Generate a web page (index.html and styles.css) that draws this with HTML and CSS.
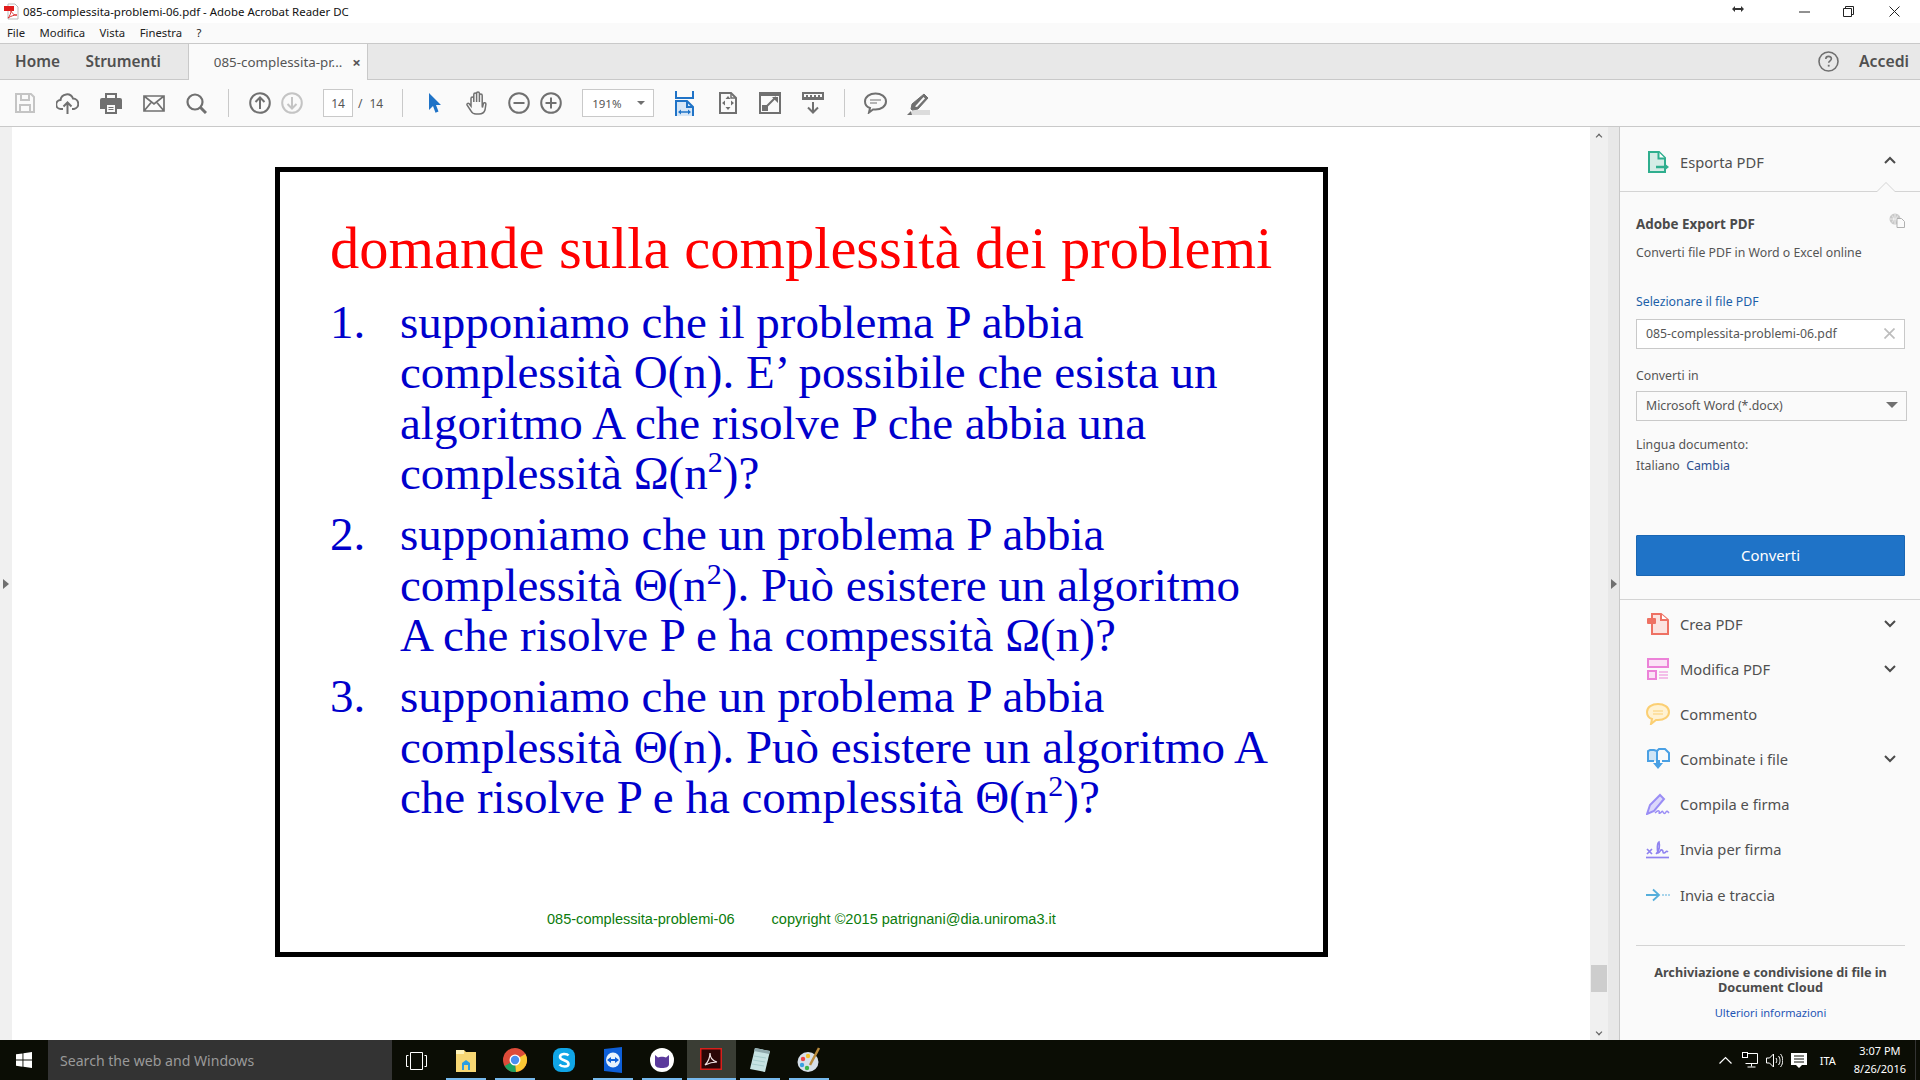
FILE: index.html
```html
<!DOCTYPE html>
<html lang="it">
<head>
<meta charset="utf-8">
<title>085-complessita-problemi-06.pdf - Adobe Acrobat Reader DC</title>
<link rel="stylesheet" href="styles.css">
</head>
<body>
<header class="titlebar">
  <svg class="app-icon" width="16" height="17" viewBox="0 0 16 17"><path d="M5 1h7l3 3v12H5z" fill="#fff" stroke="#bbb"/><rect x="1" y="3" width="10" height="5" fill="#e01b1b"/><path d="M5 15c2-2 3-5 3-8 1 4 3 5 6 5-3 0-6 1-9 3z" fill="none" stroke="#d33" stroke-width="1"/></svg>
  <span class="title-text">085-complessita-problemi-06.pdf - Adobe Acrobat Reader DC</span>
  <div class="winctl">
    <svg class="ctl-resize" width="12" height="8" viewBox="0 0 12 8"><path d="M0 4l3-3v2h6V1l3 3-3 3V5H3v2z" fill="#333"/></svg>
    <svg class="ctl-min" width="11" height="2" viewBox="0 0 11 2"><path d="M0 1h11" stroke="#222"/></svg>
    <svg class="ctl-max" width="11" height="11" viewBox="0 0 11 11"><path d="M.5 2.5h8v8h-8zM2.5 2.5v-2h8v8h-2" fill="none" stroke="#222"/></svg>
    <svg class="ctl-close" width="11" height="11" viewBox="0 0 11 11"><path d="M.5.5l10 10M10.5.5l-10 10" stroke="#222"/></svg>
  </div>
</header>
<nav class="menubar"><span>File</span><span>Modifica</span><span>Vista</span><span>Finestra</span><span>?</span></nav>
<div class="tabbar">
  <span class="tab-main home">Home</span>
  <span class="tab-main tools">Strumenti</span>
  <div class="doc-tab"><span>085-complessita-pr...</span><b class="tab-x">×</b></div>
  <div class="tab-right">
    <svg width="21" height="21" viewBox="0 0 21 21"><circle cx="10.5" cy="10.5" r="9.5" fill="none" stroke="#707070" stroke-width="1.6"/><path d="M7.8 8c0-3.6 5.6-3.4 5.6-.2 0 2-2.7 2-2.7 4" fill="none" stroke="#707070" stroke-width="1.6"/><rect x="9.8" y="13.8" width="1.8" height="1.8" fill="#707070"/></svg>
    <span class="signin">Accedi</span>
  </div>
</div>
<div class="toolbar">
  <span class="slot s-first"><svg width="20" height="20" viewBox="0 0 20 20"><path d="M1 1h15l3 3v15H1z" fill="none" stroke="#c4c4c4" stroke-width="2"/><path d="M6 1v6h8V1M5 19v-7h10v7" fill="none" stroke="#c4c4c4" stroke-width="2"/></svg></span>
  <span class="slot"><svg width="23" height="23" viewBox="0 0 23 23"><path d="M7 17H5a4.5 4.5 0 0 1-.5-9A6.5 6.5 0 0 1 17 6.500a5.300 5.300 0 0 1 1 10.500h-2" fill="none" stroke="#707070" stroke-width="2"/><path d="M11.500 22V11M7.500 14.500l4-4 4 4" fill="none" stroke="#707070" stroke-width="2"/></svg></span>
  <span class="slot"><svg width="22" height="21" viewBox="0 0 22 21"><path d="M5 5V0h12v5h3a2 2 0 0 1 2 2v9h-5v5H5v-5H0V7a2 2 0 0 1 2-2z" fill="#707070"/><path d="M7 2h8v3H7zM7 12h8v7H7z" fill="#fafafa"/><path d="M8.500 14.500h5M8.500 16.500h5" stroke="#707070"/></svg></span>
  <span class="slot"><svg width="22" height="17" viewBox="0 0 22 17"><path d="M1 1h20v15H1zM1 1l10 8 10-8M1 16l7.500-9M21 16l-7.500-9" fill="none" stroke="#707070" stroke-width="1.700"/></svg></span>
  <span class="slot"><svg width="21" height="21" viewBox="0 0 21 21"><circle cx="9" cy="9" r="7.500" fill="none" stroke="#707070" stroke-width="2.200"/><path d="M14 14l6 6" stroke="#707070" stroke-width="3"/></svg></span>
  <i class="divider d1"></i>
  <span class="slot narrow"><svg width="22" height="22" viewBox="0 0 22 22"><circle cx="11" cy="11" r="9.800" fill="none" stroke="#707070" stroke-width="2"/><path d="M11 17V5.500M6.500 10l4.500-4.500 4.500 4.500" fill="none" stroke="#707070" stroke-width="2"/></svg></span>
  <span class="slot narrow"><svg width="22" height="22" viewBox="0 0 22 22"><circle cx="11" cy="11" r="9.800" fill="none" stroke="#c4c4c4" stroke-width="2"/><path d="M11 5v11.500M6.500 12l4.500 4.500 4.500-4.500" fill="none" stroke="#c4c4c4" stroke-width="2"/></svg></span>
  <span class="page-box">14</span>
  <span class="page-sep">/</span>
  <span class="page-total">14</span>
  <i class="divider d2"></i>
  <span class="slot pointer"><svg width="13" height="20" viewBox="0 0 13 20"><path d="M1 0l12 12H8l2.500 6.500-3 1.300L5 13l-4 4z" fill="#1f73c7"/></svg></span>
  <span class="slot hand"><svg width="24" height="24" viewBox="0 0 24 24"><path d="M6 15V7.500a1.300 1.300 0 0 1 2.800 0V11 3.500a1.300 1.300 0 0 1 2.800 0V11 2.500a1.300 1.300 0 0 1 2.800 0V11 4.500a1.300 1.300 0 0 1 2.800 0V15l.2 1.500 1-4a1.300 1.300 0 0 1 2.500.6L20 19c-1 3-3 4-6 4H11c-3 0-4-1-5-3l-4-6a1.300 1.300 0 0 1 2-1.500z" fill="none" stroke="#707070" stroke-width="1.500"/></svg></span>
  <span class="slot zoom-minus"><svg width="22" height="22" viewBox="0 0 22 22"><circle cx="11" cy="11" r="9.800" fill="none" stroke="#707070" stroke-width="2"/><path d="M5.500 11h11" stroke="#707070" stroke-width="2"/></svg></span>
  <span class="slot zoom-plus"><svg width="22" height="22" viewBox="0 0 22 22"><circle cx="11" cy="11" r="9.800" fill="none" stroke="#707070" stroke-width="2"/><path d="M5.500 11h11M11 5.500v11" stroke="#707070" stroke-width="2"/></svg></span>
  <span class="zoom-box"><span>191%</span><i class="tri"></i></span>
  <span class="slot fit-w"><svg width="19" height="25" viewBox="0 0 19 25"><path d="M1 0v7h17V0" fill="none" stroke="#1f73c7" stroke-width="2"/><path d="M1 25V10h11l6 6v9" fill="#d6e6f6" stroke="#1f73c7" stroke-width="2"/><path d="M12 10v6h6" fill="none" stroke="#1f73c7" stroke-width="2"/><path d="M4 21h11" stroke="#1f73c7" stroke-width="1.500"/><path d="M3 21l3-2.500v5zM16 21l-3-2.500v5z" fill="#1f73c7"/></svg></span>
  <span class="slot fit-p"><svg width="18" height="22" viewBox="0 0 18 22"><path d="M1 1h11l5 5v15H1z" fill="none" stroke="#707070" stroke-width="2"/><path d="M12 1v5h5" fill="none" stroke="#707070" stroke-width="1.500"/><path d="M9 4l2.500 3h-5zM9 18l2.500-3h-5zM3 11l3-2.500v5zM15 11l-3-2.500v5z" fill="#707070"/></svg></span>
  <span class="slot full"><svg width="22" height="22" viewBox="0 0 22 22"><rect width="22" height="22" fill="#707070"/><rect x="2" y="4" width="18" height="16" fill="#fafafa"/><path d="M3 19h6v-6H3zM13 5l6 0v6z" fill="#707070"/><path d="M8 14l9-9" stroke="#707070" stroke-width="2"/></svg></span>
  <span class="slot read"><svg width="22" height="22" viewBox="0 0 22 22"><path d="M0 0h22v8H0z" fill="#707070"/><path d="M2 2h18v3H2z" fill="#fafafa"/><path d="M4 3h2v2H4zM8 3h2v2H8zM12 3h2v2h-2zM16 3h2v2h-2z" fill="#707070"/><path d="M11 10v10M6 15.500l5 5 5-5" fill="none" stroke="#707070" stroke-width="2"/></svg></span>
  <i class="divider d3"></i>
  <span class="slot comment"><svg width="23" height="22" viewBox="0 0 23 22"><path d="M6 16C3 15 1 13 1 9.500 1 4.500 6 1.500 11.500 1.500S22 4.500 22 9.500s-5 8-10.500 8H9l-4 3z" fill="none" stroke="#707070" stroke-width="2"/><path d="M6 8h11M6 11h7" stroke="#707070" stroke-width="1.200"/></svg></span>
  <span class="slot sign"><svg width="23" height="23" viewBox="0 0 23 23"><rect x="5" y="18" width="18" height="5" fill="#dcdcdc"/><path d="M17 2l4 4-10 11-6 1-1-1 1-5z" fill="#707070" stroke="#707070" stroke-width="1"/><path d="M16.500 5l1.500 1.500-8 8.500-2-.5z" fill="#fafafa"/><path d="M0 23l4-4 1 4z" fill="#707070"/></svg></span>
</div>
<main class="workspace">
  <div class="left-gutter"><i class="gut-arrow"></i></div>
  <section class="viewer">
    <article class="slide">
      <h1>domande sulla complessità dei problemi</h1>
      <div class="item"><span class="num">1.</span><p>supponiamo che il problema P abbia<br>complessità O(n). E’ possibile che esista un<br>algoritmo A che risolve P che abbia una<br>complessità Ω(n<sup>2</sup>)?</p></div>
      <div class="item"><span class="num">2.</span><p>supponiamo che un problema P abbia<br>complessità Θ(n<sup>2</sup>). Può esistere un algoritmo<br>A che risolve P e ha compessità Ω(n)?</p></div>
      <div class="item"><span class="num">3.</span><p>supponiamo che un problema P abbia<br>complessità Θ(n). Può esistere un algoritmo A<br>che risolve P e ha complessità Θ(n<sup>2</sup>)?</p></div>
      <footer class="slide-foot"><span>085-complessita-problemi-06</span><span>copyright ©2015 patrignani@dia.uniroma3.it</span></footer>
    </article>
  </section>
  <div class="scrollbar"><i class="sb-up"></i><i class="sb-thumb"></i><i class="sb-down"></i></div>
  <div class="pane-split"><i class="gut-arrow"></i></div>
  <aside class="panel">
    <div class="panel-head">
      <svg class="tool-ic" width="22" height="22" viewBox="0 0 22 22"><path d="M2 1h10l6 6v14H2z" fill="#d5ece6" stroke="#2fae8e" stroke-width="2"/><path d="M11.500 1v6.500H18" fill="#fff" stroke="#2fae8e" stroke-width="2"/><path d="M9 16h9" stroke="#2fae8e" stroke-width="2.500"/><path d="M17 12l5 4-5 4z" fill="#2fae8e"/></svg>
      <span class="tool-name">Esporta PDF</span>
      <svg class="chev" width="12" height="8" viewBox="0 0 12 8"><path d="M1 7l5-5 5 5" fill="none" stroke="#4b4b4b" stroke-width="2"/></svg>
      <i class="notch"></i>
    </div>
    <div class="panel-body">
      <div class="export-title"><b>Adobe Export PDF</b>
        <svg width="16" height="15" viewBox="0 0 16 15"><circle cx="6" cy="6" r="5.500" fill="#c8c8c8"/><path d="M1 6h10M6 1v10M3 2.500c2 2 2 5 0 7M9 2.500c-2 2-2 5 0 7" stroke="#fafafa" stroke-width=".7" fill="none"/><path d="M8 5.500h4.500l3 3v6H8z" fill="#fafafa" stroke="#b0b0b0"/></svg>
      </div>
      <div class="row desc">Converti file PDF in Word o Excel online</div>
      <div class="row label-link">Selezionare il file PDF</div>
      <div class="field file"><span>085-complessita-problemi-06.pdf</span><svg width="11" height="11" viewBox="0 0 11 11"><path d="M.5.500l10 10M10.500.500l-10 10" stroke="#bdbdbd" stroke-width="1.700"/></svg></div>
      <div class="row label-conv">Converti in</div>
      <div class="field select"><span>Microsoft Word (*.docx)</span><i class="tri big"></i></div>
      <div class="row lang">Lingua documento:</div>
      <div class="row lang-val">Italiano&nbsp; <span class="cambia">Cambia</span></div>
      <button class="convert">Converti</button>
    </div>
    <ul class="tool-list">
      <li><svg class="tool-ic" width="22" height="22" viewBox="0 0 22 22"><path d="M5 1h9l7 6v14H5z" fill="#fbe3e0" stroke="#ee7163" stroke-width="2"/><path d="M14 1v6h7" fill="#fff" stroke="#ee7163" stroke-width="2"/><rect y="5" width="9" height="6" rx="1" fill="#ee7163"/></svg><span class="tool-name">Crea PDF</span><svg class="chev" width="12" height="8" viewBox="0 0 12 8"><path d="M1 1l5 5 5-5" fill="none" stroke="#4b4b4b" stroke-width="2"/></svg></li>
      <li><svg class="tool-ic" width="22" height="22" viewBox="0 0 22 22"><rect x="1" y="1" width="20" height="8" fill="#fbe3f6" stroke="#ec82d8" stroke-width="2"/><rect x="1" y="13" width="8" height="8" fill="#fbe3f6" stroke="#ec82d8" stroke-width="2"/><path d="M12 14h9M12 17h9M12 20h9" stroke="#ec82d8" stroke-width="1.200"/></svg><span class="tool-name">Modifica PDF</span><svg class="chev" width="12" height="8" viewBox="0 0 12 8"><path d="M1 1l5 5 5-5" fill="none" stroke="#4b4b4b" stroke-width="2"/></svg></li>
      <li><svg class="tool-ic" width="24" height="22" viewBox="0 0 24 22"><path d="M6 16C3 15 1 13 1 9 1 4 6 1 12 1s11 3 11 8-5 8-11 8h-2l-5 4z" fill="#fff2d2" stroke="#fbcf73" stroke-width="2"/><path d="M7 8h10M7 11h10" stroke="#fbcf73" stroke-width="1.200"/></svg><span class="tool-name">Commento</span></li>
      <li><svg class="tool-ic" width="24" height="23" viewBox="0 0 24 23"><path d="M8 14H2V4l2-1h4l3 1v10" fill="#cfe5f6" stroke="#4aa0e4" stroke-width="2"/><path d="M11 4l2-2h6l4 4v8h-7" fill="none" stroke="#4aa0e4" stroke-width="2"/><path d="M10 13h4v3h3l-5 6-5-6h3z" fill="#4aa0e4"/></svg><span class="tool-name">Combinate i file</span><svg class="chev" width="12" height="8" viewBox="0 0 12 8"><path d="M1 1l5 5 5-5" fill="none" stroke="#4b4b4b" stroke-width="2"/></svg></li>
      <li><svg class="tool-ic" width="24" height="22" viewBox="0 0 24 22"><path d="M1 21l3-9L14 2l4 4L8 18z" fill="#dcd8fb" stroke="#9a8df5" stroke-width="2"/><path d="M9 20c2-2 3-3 4-2s-1 3 1 2 2-3 3-1 2 2 3 0 2 0 3 1" fill="none" stroke="#9a8df5" stroke-width="1.500"/></svg><span class="tool-name">Compila e firma</span></li>
      <li class="tall"><svg class="tool-ic" width="24" height="20" viewBox="0 0 24 20"><path d="M1 10l5 5M6 10l-5 5" stroke="#8f82f0" stroke-width="1.700"/><path d="M10 15c3-3 4-8 3-12-2 1-2 8-1 11 3-1 2-4 4-3s0 3 2 3 2-3 4-1" fill="none" stroke="#8f82f0" stroke-width="1.600"/><path d="M0 18.500h23" stroke="#8f82f0" stroke-width="1.700"/></svg><span class="tool-name">Invia per firma</span></li>
      <li class="tall"><svg class="tool-ic" width="24" height="14" viewBox="0 0 24 14"><path d="M0 7h12M7 1.500L13 7l-6 5.500" fill="none" stroke="#55aedb" stroke-width="1.800"/><path d="M16 7h8" stroke="#8cc8e6" stroke-width="1.500" stroke-dasharray="2 1"/></svg><span class="tool-name">Invia e traccia</span></li>
    </ul>
    <div class="promo">
      <b>Archiviazione e condivisione di file in<br>Document Cloud</b>
      <span>Ulteriori informazioni</span>
    </div>
  </aside>
</main>
<footer class="taskbar">
  <div class="start"><svg width="16" height="16" viewBox="0 0 16 16"><path d="M0 2.300l6.500-.9v6.200H0zM7.400 1.300L16 0v7.600H7.400zM0 8.500h6.500v6.200L0 13.800zM7.400 8.500H16V16l-8.600-1.200z" fill="#fff"/></svg></div>
  <div class="search">Search the web and Windows</div>
  <div class="taskview"><svg width="21" height="18" viewBox="0 0 21 18"><path d="M4.500.500h12v17h-12zM2.500 3.500h-2v11h2M18.500 3.500h2v11h-2" fill="none" stroke="#fff"/></svg></div>
  <div class="apps">
    <span class="app on"><svg width="22" height="24" viewBox="0 0 22 24"><path d="M1 2h8l2 2h10v20H1z" fill="#f7d774"/><path d="M1 2h8v4H1z" fill="#fff3b8"/><path d="M7 22v-7l4-3 4 3v7z" fill="#2a9ee2"/><rect x="9" y="17" width="4" height="5" fill="#f7d774"/></svg></span>
    <span class="app on"><svg width="24" height="24" viewBox="0 0 24 24"><circle cx="12" cy="12" r="12" fill="#dd4b39"/><path d="M12 12L1.600 18A12 12 0 0 0 13 24z" fill="#1ea362"/><path d="M12 12l1 12A12 12 0 0 0 22.400 6z" fill="#fcc934"/><circle cx="12" cy="12" r="5.500" fill="#fff"/><circle cx="12" cy="12" r="4.200" fill="#4a8ff0"/></svg></span>
    <span class="app"><svg width="24" height="26" viewBox="0 0 24 26"><rect x="1" y="1" width="22" height="24" rx="8" fill="#10a5e6"/><path d="M16.500 8.500C15 6.500 8 6 8 10c0 4 8.500 2.500 8.500 7 0 3.500-7 3-9 .5" fill="none" stroke="#fff" stroke-width="2.600"/></svg></span>
    <span class="app on"><svg width="20" height="26" viewBox="0 0 20 26"><path d="M1 2l18-2v26L1 24z" fill="#0e5fd8"/><ellipse cx="10" cy="13" rx="7" ry="7.500" fill="#e8f2fc"/><path d="M4 13l4-3v2h4v-2l4 3-4 3v-2H8v2z" fill="#0e5fd8"/></svg></span>
    <span class="app on"><svg width="24" height="24" viewBox="0 0 24 24"><circle cx="12" cy="12" r="12" fill="#fff"/><path d="M5 7l3 2.500c2-1 6-1 8 0L19 7v9c0 3-3 4-7 4s-7-1-7-4z" fill="#5b3a9c"/></svg></span>
    <span class="app active"><svg width="22" height="22" viewBox="0 0 22 22"><rect x=".75" y=".75" width="20.500" height="20.500" fill="#2a0606" stroke="#d8201c" stroke-width="1.500"/><path d="M5 17c3-3 5-7 5-12 0 5 3 8 7 9-4 0-8 1-12 3z" fill="none" stroke="#f4e6e6" stroke-width="1.200"/></svg></span>
    <span class="app on"><svg width="22" height="26" viewBox="0 0 22 26"><path d="M6 1l15 3-5 21L1 22z" fill="#c7e3e3"/><path d="M6 1l15 3-1 3L5 4z" fill="#8fa9ad"/><path d="M5 9l12 2M4 13l12 2M3 17l12 2" stroke="#a6cccc"/></svg></span>
    <span class="app on"><svg width="24" height="28" viewBox="0 0 24 28"><ellipse cx="11" cy="16" rx="10.500" ry="10" fill="#d6dfe9"/><circle cx="6" cy="13" r="2.200" fill="#e44"/><circle cx="11" cy="10" r="2.200" fill="#f2c230"/><circle cx="5" cy="19" r="2.200" fill="#39a0e0"/><circle cx="10" cy="22" r="2.200" fill="#3cb54a"/><path d="M13 19L22 2" stroke="#b98a3c" stroke-width="2.500"/></svg></span>
  </div>
  <div class="tray">
    <svg class="tr-chev" width="13" height="8" viewBox="0 0 13 8"><path d="M.5 7.500l6-6 6 6" fill="none" stroke="#fff" stroke-width="1.200"/></svg>
    <svg class="tr-net" width="16" height="16" viewBox="0 0 16 16"><path d="M3.500 1.500h12v10h-12M9.500 11.500v3M5.500 15h8" fill="none" stroke="#fff"/><rect x=".5" y=".5" width="5" height="5" fill="#000" stroke="#fff"/></svg>
    <svg class="tr-vol" width="17" height="15" viewBox="0 0 17 15"><path d="M.500 5h3l4-4v13l-4-4h-3zM10 5c1 1.500 1 3.500 0 5M12.500 3c2 2.500 2 6.500 0 9M14.500 1c3 3.500 3 9.500 0 13" fill="none" stroke="#fff"/></svg>
    <svg class="tr-note" width="16" height="15" viewBox="0 0 16 15"><path d="M0 0h16v12h-5l-3 3-3-3H0z" fill="#fff"/><path d="M3 3h10M3 6h10M3 9h10" stroke="#0b0d05"/></svg>
    <span class="tr-ita">ITA</span>
    <span class="clock">3:07 PM<br>8/26/2016</span>
    <i class="show-desk"></i>
  </div>
</footer>
</body>
</html>
```
FILE: styles.css
```css
* { box-sizing: border-box; }
html, body { margin: 0; height: 1080px; overflow: hidden; }
body { display: flex; flex-direction: column; font-family: "Noto Sans", "Open Sans", sans-serif; color: #4b4b4b; background: #fff; }

.titlebar { height: 23px; background: #fff; display: flex; align-items: center; padding-left: 3px; font-size: 11.430px; color: #111; flex: none; }
.title-text { margin-left: 4px; }
.winctl { margin-left: auto; display: flex; align-items: center; }
.ctl-resize { margin-right: 55px; margin-top: -5px; }
.ctl-min { margin-right: 33.500px; }
.ctl-max { margin-right: 35px; }
.ctl-close { margin-right: 20px; }

.menubar { height: 20px; background: #fafafa; display: flex; align-items: center; font-size: 11.300px; color: #222; padding: 0 0 2px 7px; gap: 14.500px; flex: none; }

.tabbar { height: 37px; background: #e8e8e8; border-top: 1px solid #c9c9c9; border-bottom: 1px solid #c9c9c9; display: flex; align-items: stretch; flex: none; }
.tab-main { font-size: 15.400px; font-weight: 600; color: #505050; line-height: 35px; }
.home { margin-left: 15px; }
.tools { margin-left: 25.500px; }
.doc-tab { margin-left: 27px; width: 180px; height: 36px; background: #fafafa; border-left: 1px solid #c9c9c9; border-right: 1px solid #c9c9c9; display: flex; align-items: center; padding-left: 25px; font-size: 13.350px; color: #555; }
.tab-x { margin-left: 10px; font-size: 15px; color: #555; }
.tab-right { margin-left: auto; display: flex; align-items: center; padding: 0 11px 1px 0; }
.signin { margin-left: 20px; font-size: 15.800px; font-weight: 600; color: #505050; }

.toolbar { height: 47px; background: #fafafa; border-bottom: 1px solid #c9c9c9; display: flex; align-items: center; flex: none; font-size: 12px; color: #555; }
.slot { width: 43px; display: flex; justify-content: center; flex: none; }
.s-first { margin-left: 3px; }
.narrow { width: 32px; }
.divider { display: block; width: 1px; height: 28px; background: #c9c9c9; flex: none; }
.d1 { margin: 0 15px 0 10px; }
.d2 { margin-left: 19px; }
.page-box { width: 30px; height: 28px; margin-left: 15px; background: #fff; border: 1px solid #c9c9c9; display: flex; align-items: center; justify-content: center; }
.page-sep { margin-left: 5px; }
.page-total { margin-left: 7px; }
.pointer { width: 13px; margin-left: 25px; }
.hand { width: 24px; margin-left: 24px; }
.zoom-minus { width: 22px; margin-left: 19px; }
.zoom-plus { width: 22px; margin-left: 10px; }
.zoom-box { width: 72px; height: 28px; margin-left: 20px; background: #fff; border: 1px solid #c9c9c9; display: flex; align-items: center; padding-left: 9px; justify-content: space-between; padding-right: 8px; font-size: 11.500px; }
.tri { width: 0; height: 0; border-left: 4px solid transparent; border-right: 4px solid transparent; border-top: 4px solid #707070; }
.tri.big { border-left-width: 6px; border-right-width: 6px; border-top-width: 6px; }
.fit-w { width: 19px; margin-left: 21px; }
.fit-p { width: 18px; margin-left: 25px; }
.full { width: 22px; margin-left: 22px; }
.read { width: 22px; margin-left: 21px; }
.d3 { margin-left: 20px; }
.comment { width: 23px; margin-left: 19px; }
.sign { width: 23px; margin-left: 20px; }

.workspace { flex: 1; min-height: 0; display: flex; }
.left-gutter { width: 12px; background: #f0f0f0; display: flex; align-items: center; }
.gut-arrow { width: 0; height: 0; border-top: 5px solid transparent; border-bottom: 5px solid transparent; border-left: 6px solid #707070; margin: 0 0 0 3px; }
.viewer { width: 1578px; background: #fff; padding: 40px 0 0 263px; flex: none; }

.slide { width: 1053px; height: 790px; border: 5px solid #000; font-family: "Liberation Serif", "Times New Roman", serif; color: #0000cc; padding: 43px 0 0 50px; display: flex; flex-direction: column; }
.slide h1 { margin: 0 0 13.500px; font-size: 58.500px; line-height: 68px; font-weight: 400; color: #f00; white-space: nowrap; }
.item { display: flex; font-size: 47px; line-height: 50.500px; margin-bottom: 10.500px; }
.num { width: 70px; flex: none; }
.item p { margin: 0; white-space: nowrap; }
.item sup { font-size: 30px; line-height: 0; vertical-align: 17px; }
.slide-foot { font-family: "Liberation Sans", Arial, sans-serif; font-size: 14.550px; color: #0c7c0c; margin: auto 0 0 217px; padding-bottom: 25.500px; display: flex; gap: 37px; }

.scrollbar { width: 18px; background: #f0f0f0; display: flex; flex-direction: column; align-items: center; flex: none; }
.sb-up, .sb-down { width: 8px; height: 8px; border-left: 2px solid #666; border-top: 2px solid #666; transform: rotate(45deg) scale(.6); margin-top: 6px; }
.sb-thumb { width: 16px; height: 27px; background: #cdcdcd; margin-top: 824px; }
.sb-down { transform: rotate(225deg) scale(.6); margin-top: 36px; }
.pane-split { width: 12px; background: #e8e8e8; border-right: 1px solid #c9c9c9; display: flex; align-items: center; flex: none; }

.panel { width: 300px; background: #fafafa; font-size: 12.300px; color: #555; flex: none; }
.panel-head { position: relative; height: 65px; border-bottom: 1px solid #d4d4d4; display: flex; align-items: center; padding: 5px 24px 0 26px; }
.tool-ic { width: 24px; flex: none; }
.tool-name { margin-left: 10px; font-size: 14.700px; color: #505050; }
.chev { margin-left: auto; flex: none; }
.panel-head .chev { margin-top: -3px; }
.notch { position: absolute; right: 24px; bottom: -1px; width: 0; height: 0; border-left: 10px solid transparent; border-right: 10px solid transparent; border-bottom: 10px solid #d4d4d4; }
.notch::after { content: ""; position: absolute; left: -9px; top: 1px; width: 0; height: 0; border-left: 9px solid transparent; border-right: 9px solid transparent; border-bottom: 9px solid #fafafa; }
.panel-body { padding: 23px 15px 23px 16px; border-bottom: 1px solid #d4d4d4; }
.export-title { display: flex; justify-content: space-between; align-items: flex-start; height: 20px; line-height: 18px; font-size: 13.400px; color: #4b4b4b; }
.export-title svg { margin-top: -2px; }
.row { height: 20px; line-height: 20px; }
.desc { margin-top: 8px; }
.label-link { margin-top: 29px; color: #1b5fa8; }
.field { height: 30px; background: #fff; border: 1px solid #c9c9c9; display: flex; align-items: center; justify-content: space-between; padding: 0 9px 2px 9px; }
.file { margin-top: 7px; }
.select { margin-top: 5px; margin-right: -2px; background: #fafafa; padding-right: 8px; }
.label-conv { margin-top: 17px; }
.lang { margin-top: 14px; }
.lang-val { margin-top: 1px; }
.cambia { color: #2c4f8f; }
.convert { display: block; width: 100%; height: 41px; margin-top: 59px; padding-bottom: 3px; background: #1f73c7; border: 1px solid #1a66b3; border-radius: 1px; color: #fff; font: 14.900px "Noto Sans", sans-serif; }
.tool-list { list-style: none; margin: 0; padding: 1px 24px 0 26px; }
.tool-list li { display: flex; align-items: center; height: 45px; }
.tool-list li.tall { height: 46px; }
.promo { margin: 27px 15px 0 16px; padding-top: 19px; border-top: 1px solid #d4d4d4; text-align: center; display: flex; flex-direction: column; align-items: center; }
.promo b { font-size: 12.700px; line-height: 15px; color: #4b4b4b; white-space: nowrap; }
.promo span { margin-top: 10px; font-size: 11.100px; line-height: 15px; color: #1f55b5; }

.taskbar { height: 40px; background: #0b0d05; display: flex; align-items: stretch; flex: none; color: #fff; }
.start { width: 48px; display: flex; align-items: center; justify-content: center; }
.search { width: 344px; background: #333; color: #9a9a9a; font-size: 14.100px; line-height: 42px; padding-left: 12px; }
.taskview { width: 49px; display: flex; align-items: center; justify-content: center; padding-top: 2px; }
.apps { display: flex; margin-left: .5px; }
.app { position: relative; width: 49px; display: flex; align-items: center; justify-content: center; }
.app.on::after { content: ""; position: absolute; left: 4.500px; right: 4.500px; bottom: 0; height: 2px; background: #76b9ed; }
.app.active { background: #3a3d34; border-bottom: 2px solid #76b9ed; }
.tray { margin-left: auto; display: flex; align-items: center; font-size: 11px; color: #fff; }
.tr-chev { margin-right: 10px; }
.tr-net { margin-right: 8px; }
.tr-vol { margin-right: 8px; }
.tr-note { margin-right: 13px; }
.tr-ita { margin-right: 18px; }
.clock { text-align: center; line-height: 18px; font-size: 11px; margin-right: 9px; }
.show-desk { width: 1px; height: 40px; background: #333; margin-right: 4px; }
```
